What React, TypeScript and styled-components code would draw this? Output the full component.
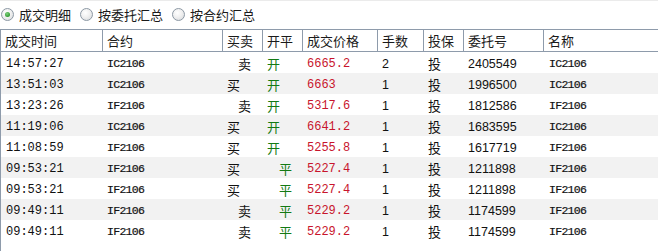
import styled, { createGlobalStyle } from 'styled-components'

const GlobalStyle = createGlobalStyle`
    html, body {
        margin: 0;
        padding: 0;
        background: #ffffff;
    }
    body {
        width: 658px;
        height: 251px;
        overflow: hidden;
        font-family: "Noto Sans CJK SC", "Liberation Sans", sans-serif;
        color: #111;
    }
`

const COLS = '102px 120px 40px 40px 75px 46px 40px 80px 1fr'
const LINE = '#8e9bab'
const CJK = '"Noto Sans CJK SC", "Liberation Sans", sans-serif'
const MONO = '"Liberation Mono", "DejaVu Sans Mono", monospace'
const SANS = '"Liberation Sans", Arial, sans-serif'

const Page = styled.div`
    width: 658px;
    height: 251px;
    display: flex;
    flex-direction: column;
    border-top: 1px solid #ebebeb;
    box-sizing: border-box;
`

const RadioBar = styled.div`
    height: 28px;
    display: flex;
    align-items: center;
    padding-left: 1px;
    gap: 9px;
`

const RadioItem = styled.label`
    display: flex;
    align-items: center;
    gap: 5px;
    font-family: ${CJK};
    font-size: 13px;
    line-height: 1;
    color: #1a1a1a;
    margin-top: -2px;
`

const RadioDot = styled.span<{ $on?: boolean }>`
    position: relative;
    width: 11px;
    height: 11px;
    border-radius: 50%;
    border: 1px solid #8c98a4;
    background: radial-gradient(circle at 40% 35%, #ffffff 0%, #f0f0f0 45%, #d4d7da 100%);
    box-sizing: content-box;

    &::after {
        content: '';
        display: ${p => (p.$on ? 'block' : 'none')};
        position: absolute;
        left: 3px;
        top: 3px;
        width: 5px;
        height: 5px;
        border-radius: 50%;
        background: radial-gradient(circle at 40% 35%, #7fd07f 0%, #2f9a2f 70%, #1e7a1e 100%);
    }
`

const Table = styled.div`
    flex: 1;
    border-left: 1px solid ${LINE};
`

const HeadRow = styled.div`
    display: grid;
    grid-template-columns: ${COLS};
    height: 21px;
    border-top: 1px solid ${LINE};
    border-bottom: 1px solid ${LINE};
`

const HeadCell = styled.div`
    display: flex;
    align-items: center;
    padding-left: 4px;
    border-right: 1px solid ${LINE};
    font-family: ${CJK};
    font-size: 13px;
    color: #1a1a1a;
    white-space: nowrap;
    overflow: hidden;

    &:last-child {
        border-right: none;
    }
`

const Row = styled.div<{ $alt?: boolean }>`
    display: grid;
    grid-template-columns: ${COLS};
    height: 21px;
    background: ${p => (p.$alt ? '#f2f2f2' : '#ffffff')};
`

type Kind = 'time' | 'code' | 'cjk' | 'num' | 'price'

const Cell = styled.div<{ $kind: Kind; $shift?: number; $color?: string }>`
    display: flex;
    align-items: center;
    padding-left: ${p => 4 + (p.$shift || 0)}px;
    padding-top: 2px;
    white-space: nowrap;
    color: ${p => p.$color || '#111'};
    font-family: ${p =>
        p.$kind === 'time' || p.$kind === 'price' || p.$kind === 'code' ? MONO : p.$kind === 'num' ? SANS : CJK};
    font-size: ${p =>
        p.$kind === 'code' ? '11.5px' : p.$kind === 'num' ? '12.5px' : p.$kind === 'cjk' ? '13px' : '12px'};
    letter-spacing: ${p => (p.$kind === 'code' ? '-0.7px' : '0')};
    -webkit-text-stroke: ${p => (p.$kind === 'code' ? '0.2px #111' : '0')};
`

interface Trade {
    time: string
    code: string
    side: '买' | '卖'
    open: '开' | '平'
    price: string
    qty: string
    order: string
}

const trades: Trade[] = [
    { time: '14:57:27', code: 'IC2106', side: '卖', open: '开', price: '6665.2', qty: '2', order: '2405549' },
    { time: '13:51:03', code: 'IC2106', side: '买', open: '开', price: '6663', qty: '1', order: '1996500' },
    { time: '13:23:26', code: 'IF2106', side: '卖', open: '开', price: '5317.6', qty: '1', order: '1812586' },
    { time: '11:19:06', code: 'IC2106', side: '买', open: '开', price: '6641.2', qty: '1', order: '1683595' },
    { time: '11:08:59', code: 'IF2106', side: '买', open: '开', price: '5255.8', qty: '1', order: '1617719' },
    { time: '09:53:21', code: 'IF2106', side: '买', open: '平', price: '5227.4', qty: '1', order: '1211898' },
    { time: '09:53:21', code: 'IF2106', side: '买', open: '平', price: '5227.4', qty: '1', order: '1211898' },
    { time: '09:49:11', code: 'IF2106', side: '卖', open: '平', price: '5229.2', qty: '1', order: '1174599' },
    { time: '09:49:11', code: 'IF2106', side: '卖', open: '平', price: '5229.2', qty: '1', order: '1174599' },
]

const headers = ['成交时间', '合约', '买卖', '开平', '成交价格', '手数', '投保', '委托号', '名称']

export default function App() {
    return (
        <>
            <GlobalStyle />
            <Page>
                <RadioBar>
                    <RadioItem><RadioDot $on />成交明细</RadioItem>
                    <RadioItem><RadioDot />按委托汇总</RadioItem>
                    <RadioItem><RadioDot />按合约汇总</RadioItem>
                </RadioBar>
                <Table>
                    <HeadRow>
                        {headers.map(h => (
                            <HeadCell key={h}>{h}</HeadCell>
                        ))}
                    </HeadRow>
                    {trades.map((t, i) => (
                        <Row key={i} $alt={i % 2 === 1}>
                            <Cell $kind="time" $shift={1}>{t.time}</Cell>
                            <Cell $kind="code">{t.code}</Cell>
                            <Cell $kind="cjk" $shift={t.side === '卖' ? 11 : 0}>{t.side}</Cell>
                            <Cell $kind="cjk" $shift={t.open === '平' ? 12 : 0} $color="#137a13">{t.open}</Cell>
                            <Cell $kind="price" $color="#c8142c">{t.price}</Cell>
                            <Cell $kind="num">{t.qty}</Cell>
                            <Cell $kind="cjk">投</Cell>
                            <Cell $kind="num">{t.order}</Cell>
                            <Cell $kind="code" $shift={1}>{t.code}</Cell>
                        </Row>
                    ))}
                </Table>
            </Page>
        </>
    )
}
